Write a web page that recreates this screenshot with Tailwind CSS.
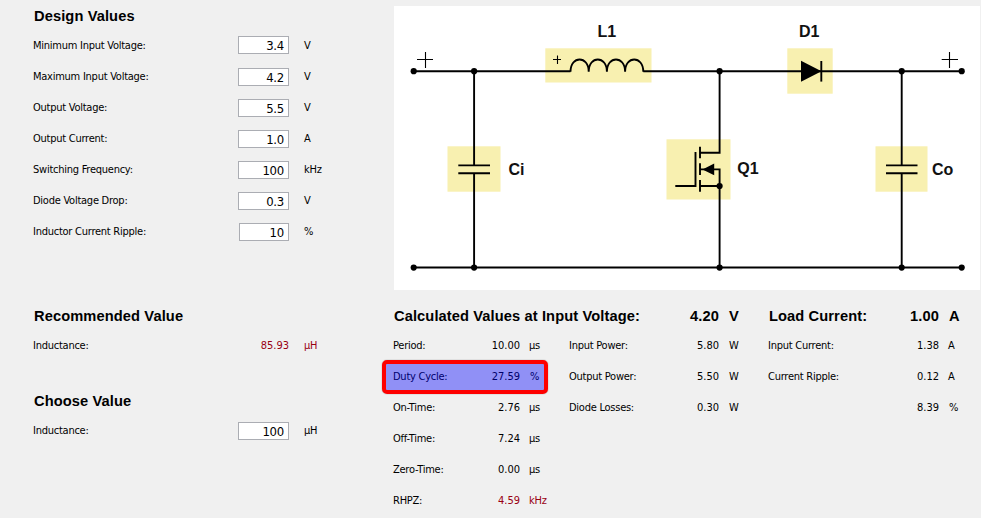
<!DOCTYPE html>
<html lang="en">
<head>
<meta charset="utf-8">
<title>Boost Converter Calculator</title>
<script src="https://cdn.jsdelivr.net/npm/@tailwindcss/browser@4"></script>
</head>
<body class="w-[981px] h-[518px] overflow-hidden bg-[#f0f0f0] text-black font-['DejaVu_Sans_Condensed','DejaVu_Sans',sans-serif] [font-stretch:condensed] text-[11px] leading-[14px] whitespace-nowrap">
<div class="flex h-[518px]">

  <!-- Inputs -->
  <section class="w-[360px] pl-[33px] pt-[6px] tracking-[-0.25px]">
    <h2 class="h-[24px] pl-px leading-[20px] font-['Liberation_Sans',sans-serif] text-[14.67px] font-bold tracking-[0.1px]">Design Values</h2>
    <div class="flex h-[31px] items-center"><span class="w-[205px]">Minimum Input Voltage:</span><span class="w-[51px] h-[18px] mr-[15px] pr-[4px] -mt-[2px] bg-white border border-[#abadb3] text-[13px] leading-[17px] text-right">3.4</span><span>V</span></div>
    <div class="flex h-[31px] items-center"><span class="w-[205px]">Maximum Input Voltage:</span><span class="w-[51px] h-[18px] mr-[15px] pr-[4px] bg-white border border-[#abadb3] text-[13px] leading-[17px] text-right">4.2</span><span>V</span></div>
    <div class="flex h-[31px] items-center"><span class="w-[205px]">Output Voltage:</span><span class="w-[51px] h-[18px] mr-[15px] pr-[4px] bg-white border border-[#abadb3] text-[13px] leading-[17px] text-right">5.5</span><span>V</span></div>
    <div class="flex h-[31px] items-center"><span class="w-[205px]">Output Current:</span><span class="w-[51px] h-[18px] mr-[15px] pr-[4px] bg-white border border-[#abadb3] text-[13px] leading-[17px] text-right">1.0</span><span>A</span></div>
    <div class="flex h-[31px] items-center"><span class="w-[205px]">Switching Frequency:</span><span class="w-[51px] h-[18px] mr-[15px] pr-[4px] bg-white border border-[#abadb3] text-[13px] leading-[17px] text-right">100</span><span>kHz</span></div>
    <div class="flex h-[31px] items-center"><span class="w-[205px]">Diode Voltage Drop:</span><span class="w-[51px] h-[18px] mr-[15px] pr-[4px] bg-white border border-[#abadb3] text-[13px] leading-[17px] text-right">0.3</span><span>V</span></div>
    <div class="flex h-[31px] items-center"><span class="w-[206px]">Inductor Current Ripple:</span><span class="w-[50px] h-[18px] mr-[15px] pr-[4px] bg-white border border-[#abadb3] text-[13px] leading-[17px] text-right">10</span><span>%</span></div>

    <h2 class="mt-[59px] h-[24px] pl-px leading-[20px] font-['Liberation_Sans',sans-serif] text-[14.67px] font-bold tracking-[0.1px]">Recommended Value</h2>
    <div class="flex h-[31px] items-center"><span class="w-[205px]">Inductance:</span><span class="w-[51px] mr-[15px] text-right text-[#990012] tracking-[0px]">85.93</span><span class="text-[#990012]">µH</span></div>
    <h2 class="mt-[30px] h-[24px] pl-px leading-[20px] font-['Liberation_Sans',sans-serif] text-[14.67px] font-bold tracking-[0.1px]">Choose Value</h2>
    <div class="flex h-[31px] items-center"><span class="w-[205px]">Inductance:</span><span class="w-[51px] h-[18px] mr-[15px] pr-[4px] bg-white border border-[#abadb3] text-[13px] leading-[17px] text-right">100</span><span>µH</span></div>
  </section>

  <div class="w-[621px] pl-[34px] pt-[6px]">
    <!-- Boost converter schematic -->
    <svg class="block w-[586px] h-[284px] bg-white" viewBox="394 6 586 284" fill="none" stroke="#000" stroke-width="1.9">
      <g fill="#f8f0b0" stroke="none">
        <rect x="545.3" y="48.3" width="106.2" height="34.2"/>
        <rect x="787.3" y="48.3" width="45.4" height="45.4"/>
        <rect x="447.5" y="146.3" width="53" height="45.4"/>
        <rect x="666.5" y="139.3" width="64" height="60.2"/>
        <rect x="875.5" y="146.3" width="52" height="45.4"/>
      </g>
      <path d="M413.7 71.2H570.5V71.8C570.5 55.3 588.7 55.3 588.7 71.8C588.7 55.3 606.9 55.3 606.9 71.8C606.9 55.3 625.1 55.3 625.1 71.8C625.1 55.3 643.3 55.3 643.3 71.8V71.2H961.7M413.7 267.5H961.7"/>
      <path d="M474.1 71V165.4M474.1 173.2V267.5M901.7 71V165.4M901.7 173.2V267.5M458.3 165.4H490M458.3 173.2H490M886 165.4H917.5M886 173.2H917.5"/>
      <path d="M719.6 71V152.8H700M719.6 267.5V169.4H700M719.6 186H700M675.3 186H695.5V152M700 146.7V158.3M700 163.2V175M700 180V191.7"/>
      <path d="M821.3 61V81.6"/>
      <path d="M801 60.8V81.8L821.5 71.3ZM702.5 169.4L714.2 163.6V175.2Z" fill="#000" stroke="none"/>
      <path d="M417 59.5H433M425.5 52V68M941.7 59.5H958M949.5 52V68M553 59.5H561M557.5 55.5V64" stroke-width="1.1"/>
      <g fill="#000" stroke="none">
        <circle cx="413.7" cy="71.2" r="3.1"/><circle cx="474.1" cy="71.2" r="3.1"/><circle cx="719.6" cy="71.2" r="3.1"/><circle cx="901.7" cy="71.2" r="3.1"/><circle cx="961.7" cy="71.2" r="3.1"/>
        <circle cx="413.7" cy="267.6" r="3.1"/><circle cx="474.1" cy="267.6" r="3.1"/><circle cx="719.6" cy="267.6" r="3.1"/><circle cx="901.7" cy="267.6" r="3.1"/><circle cx="961.7" cy="267.6" r="3.1"/>
        <circle cx="719.6" cy="186" r="3.1"/>
      </g>
      <g class="font-['Liberation_Sans',sans-serif] text-[16px] font-bold" fill="#111" stroke="none">
        <text x="597.5" y="37">L1</text><text x="799" y="37">D1</text><text x="508.5" y="174.5">Ci</text><text x="737.3" y="174">Q1</text><text x="932" y="174.5">Co</text>
      </g>
    </svg>

    <!-- Results -->
    <div class="mt-[16px] flex h-[24px] leading-[20px] font-['Liberation_Sans',sans-serif] text-[14.67px] font-bold tracking-[0.1px]">
      <span class="w-[265px]">Calculated Values at Input Voltage:</span><span class="w-[60px] text-right">4.20</span><span class="w-[50px] pl-[10px]">V</span><span class="w-[100px]">Load Current:</span><span class="w-[70px] text-right">1.00</span><span class="pl-[10px]">A</span>
    </div>
    <div class="-ml-px flex tracking-[-0.25px]">
      <div class="relative w-[176px]">
        <div class="flex h-[31px] items-center"><span class="w-[66px]">Period:</span><span class="w-[61px] text-right tracking-[0px]">10.00</span><span class="pl-[9px]">µs</span></div>
        <div class="flex h-[31px] items-center"><span class="w-[66px]">Duty Cycle:</span><span class="w-[61px] text-right tracking-[0px]">27.59</span><span class="pl-[10px]">%</span></div>
        <div class="flex h-[31px] items-center"><span class="w-[66px]">On-Time:</span><span class="w-[61px] text-right tracking-[0px]">2.76</span><span class="pl-[9px]">µs</span></div>
        <div class="flex h-[31px] items-center"><span class="w-[66px]">Off-Time:</span><span class="w-[61px] text-right tracking-[0px]">7.24</span><span class="pl-[9px]">µs</span></div>
        <div class="flex h-[31px] items-center"><span class="w-[66px]">Zero-Time:</span><span class="w-[61px] text-right tracking-[0px]">0.00</span><span class="pl-[9px]">µs</span></div>
        <div class="flex h-[31px] items-center"><span class="w-[66px]">RHPZ:</span><span class="w-[61px] text-right text-[#990012] tracking-[0px]">4.59</span><span class="pl-[9px] text-[#990012]">kHz</span></div>
        <div class="absolute -left-[11px] top-[30px] w-[166px] h-[34px] rounded-[5px] border-4 border-[#fe0000] bg-[#0000ff]/40 shadow-[0_0_1px_#555]"></div>
      </div>
      <div class="w-[199px]">
        <div class="flex h-[31px] items-center"><span class="w-[90px]">Input Power:</span><span class="w-[60px] text-right tracking-[0px]">5.80</span><span class="pl-[10px]">W</span></div>
        <div class="flex h-[31px] items-center"><span class="w-[90px]">Output Power:</span><span class="w-[60px] text-right tracking-[0px]">5.50</span><span class="pl-[10px]">W</span></div>
        <div class="flex h-[31px] items-center"><span class="w-[90px]">Diode Losses:</span><span class="w-[60px] text-right tracking-[0px]">0.30</span><span class="pl-[10px]">W</span></div>
      </div>
      <div>
        <div class="flex h-[31px] items-center"><span class="w-[110px]">Input Current:</span><span class="w-[61px] text-right tracking-[0px]">1.38</span><span class="pl-[9px]">A</span></div>
        <div class="flex h-[31px] items-center"><span class="w-[110px]">Current Ripple:</span><span class="w-[61px] text-right tracking-[0px]">0.12</span><span class="pl-[9px]">A</span></div>
        <div class="flex h-[31px] items-center"><span class="w-[110px]"></span><span class="w-[61px] text-right tracking-[0px]">8.39</span><span class="pl-[10px]">%</span></div>
      </div>
    </div>
  </div>
</div>
</body>
</html>
